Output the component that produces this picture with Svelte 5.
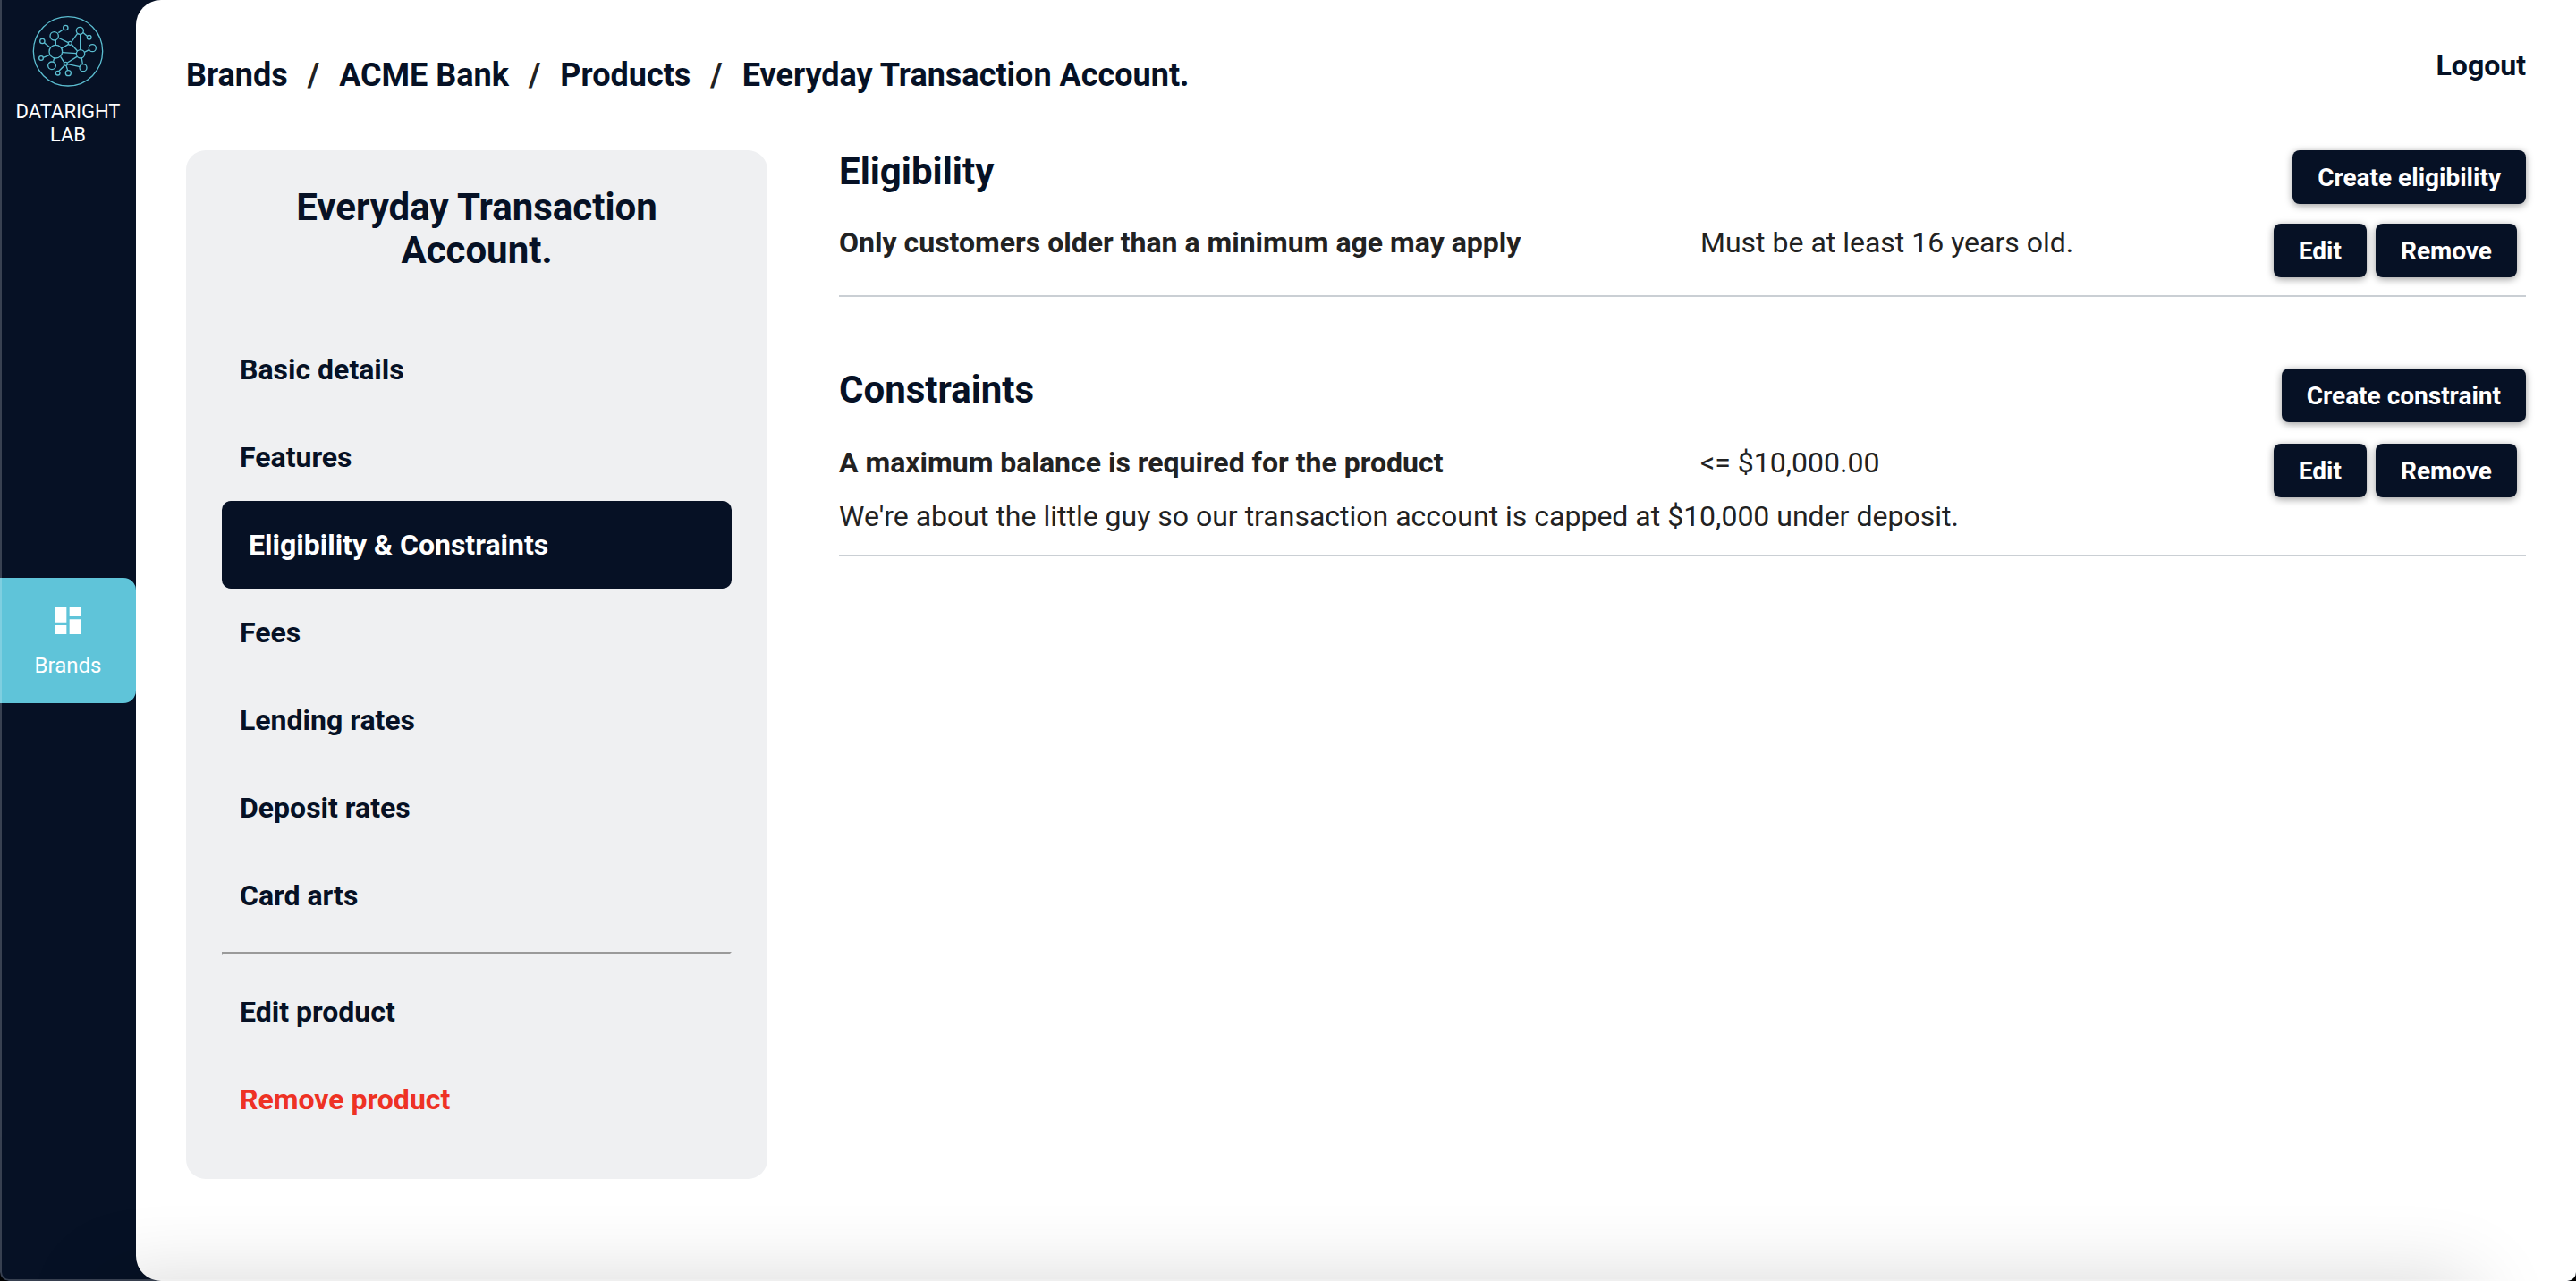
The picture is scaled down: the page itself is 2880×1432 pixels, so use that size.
<script>
  const crumbs = ['Brands', 'ACME Bank', 'Products', 'Everyday Transaction Account.'];

  const menu = [
    'Basic details',
    'Features',
    'Eligibility & Constraints',
    'Fees',
    'Lending rates',
    'Deposit rates',
    'Card arts'
  ];
  let active = $state('Eligibility & Constraints');

  const sections = [
    {
      id: 'eligibility',
      title: 'Eligibility',
      action: 'Create eligibility',
      rows: [
        {
          name: 'Only customers older than a minimum age may apply',
          value: 'Must be at least 16 years old.'
        }
      ]
    },
    {
      id: 'constraints',
      title: 'Constraints',
      action: 'Create constraint',
      rows: [
        {
          name: 'A maximum balance is required for the product',
          value: '<= $10,000.00',
          note: "We're about the little guy so our transaction account is capped at $10,000 under deposit."
        }
      ]
    }
  ];

  const links = [
    [196, 110, 212, 99],
    [194, 126, 229, 143],
    [187, 135, 187, 152],
    [149, 144, 168, 159],
    [145, 193, 167, 184],
    [182, 194, 179, 206],
    [206, 162, 229, 149],
    [210, 176, 256, 179],
    [240, 140, 260, 112],
    [269, 116, 269, 167],
    [278, 109, 292, 121],
    [241, 150, 260, 171],
    [283, 175, 300, 166],
    [203, 190, 215, 209],
    [226, 210, 258, 190],
    [227, 215, 268, 224],
    [274, 195, 277, 215],
    [216, 220, 198, 238],
    [222, 220, 227, 236]
  ];
  const nodes = [
    [187, 173, 22],
    [182, 121, 14],
    [220, 93, 8],
    [142, 138, 8],
    [138, 195, 7],
    [174, 220, 13],
    [235, 145, 6],
    [268, 103, 12],
    [299, 125, 7],
    [310, 161, 12],
    [270, 181, 14],
    [279, 227, 12],
    [220, 214, 6],
    [194, 245, 7],
    [229, 245, 9]
  ];
</script>

<div class="app">
  <aside class="rail">
    <a class="brand" href="#home">
      <svg class="logo" viewBox="108 51 240 240" aria-hidden="true">
        <circle cx="228" cy="172" r="116" />
        {#each links as [x1, y1, x2, y2]}
          <line {x1} {y1} {x2} {y2} />
        {/each}
        {#each nodes as [cx, cy, r]}
          <circle {cx} {cy} {r} />
        {/each}
      </svg>
      <span>DATARIGHT LAB</span>
    </a>
    <nav aria-label="Main">
      <a class="rail-item" href="#brands">
        <svg viewBox="0 0 24 24" aria-hidden="true">
          <path d="M3 13h8V3H3v10zm0 8h8v-6H3v6zm10 0h8V11h-8v10zm0-18v6h8V3h-8z" />
        </svg>
        <span>Brands</span>
      </a>
    </nav>
  </aside>

  <div class="page">
    <header>
      <nav class="crumbs" aria-label="Breadcrumb">
        {#each crumbs as crumb, i}
          {#if i > 0}<span>/</span>{/if}
          <a href="#crumb-{i}">{crumb}</a>
        {/each}
      </nav>
      <a class="logout" href="#logout">Logout</a>
    </header>

    <div class="columns">
      <aside class="card">
        <h1>Everyday Transaction Account.</h1>
        <nav aria-label="Product">
          {#each menu as item}
            <a class="item" class:active={item === active} href="#menu" onclick={() => (active = item)}>{item}</a>
          {/each}
          <hr />
          <a class="item" href="#edit">Edit product</a>
          <a class="item danger" href="#remove">Remove product</a>
        </nav>
      </aside>

      <main>
        {#each sections as section}
          <section class={section.id}>
            <div class="head">
              <h2>{section.title}</h2>
              <button>{section.action}</button>
            </div>
            {#each section.rows as row}
              <div class="row">
                <div class="facts">
                  <strong>{row.name}</strong>
                  <span>{row.value}</span>
                  {#if row.note}<p>{row.note}</p>{/if}
                </div>
                <div class="actions">
                  <button>Edit</button>
                  <button>Remove</button>
                </div>
              </div>
            {/each}
          </section>
        {/each}
      </main>
    </div>
  </div>
  <div class="glow"></div>
  <div class="edge"></div>
</div>

<style>
  :global(body) {
    background: #000;
  }
  .app {
    position: relative;
    display: grid;
    grid-template-columns: 152px 1fr;
    min-height: 100vh;
    overflow: hidden;
    border-radius: 0 0 10px 10px;
    background: #061125;
    color: #222;
    font-family: Roboto, sans-serif;
    font-size: 32px;
    line-height: 38px;
  }
  a {
    color: #061125;
    text-decoration: none;
  }
  h1,
  h2,
  p {
    margin: 0;
  }

  .rail {
    display: grid;
    grid-template-rows: 1fr auto 1fr;
  }
  .brand {
    display: flex;
    flex-direction: column;
    align-items: center;
    gap: 15px;
    padding: 17px 8px 0;
    color: #fff;
    font-size: 22px;
    line-height: 26px;
    text-align: center;
  }
  .logo {
    width: 80px;
    height: 80px;
    fill: none;
    stroke: #5bbdd0;
    stroke-width: 4;
  }
  .rail-item {
    display: flex;
    flex-direction: column;
    align-items: center;
    gap: 16px;
    padding: 28px 0;
    border-radius: 0 14px 14px 0;
    background: #5fc4d9;
    color: #fff;
    font-size: 24px;
    line-height: 28px;
  }
  .rail-item svg {
    width: 40px;
    height: 40px;
    fill: #fff;
  }

  .page {
    padding: 50px 56px;
    border-radius: 28px 0 0 28px;
    background: #fff;
  }
  header {
    display: flex;
    justify-content: space-between;
    align-items: flex-start;
    height: 118px;
    font-weight: 700;
  }
  .crumbs {
    display: flex;
    gap: 22px;
    padding-top: 13px;
    font-size: 36px;
    line-height: 42px;
  }
  .logout {
    padding-top: 4px;
  }

  .columns {
    display: grid;
    grid-template-columns: 650px 1fr;
    gap: 80px;
    align-items: start;
  }
  .card {
    padding: 40px;
    border-radius: 22px;
    background: #eff0f2;
  }
  h1,
  h2 {
    color: #061125;
    font-size: 42px;
    font-weight: 700;
    line-height: 48px;
  }
  h1 {
    padding: 0 60px 60px;
    text-align: center;
  }
  .item {
    display: block;
    padding: 30px 20px;
    border-radius: 10px;
    font-weight: 700;
  }
  .item.active {
    padding: 30px;
    background: #061125;
    color: #fff;
  }
  .item.danger {
    color: #ee3224;
  }
  hr {
    margin: 14px 0;
    border: 2px solid;
    border-color: #9a9a9a #eff0f2 #eff0f2 #9a9a9a;
  }

  main {
    display: grid;
    gap: 80px;
  }
  .head {
    display: flex;
    justify-content: space-between;
    align-items: flex-start;
  }
  button {
    height: 60px;
    padding: 2px 28px 0;
    border: 0;
    border-radius: 8px;
    background: #061125;
    box-shadow: 0 2px 8px rgba(0, 0, 0, 0.4);
    color: #fff;
    font: 700 28px/32px Roboto, sans-serif;
    white-space: nowrap;
  }
  .row {
    display: flex;
    align-items: flex-start;
    padding: 22px 0 20px;
    border-bottom: 2px solid #cacfd4;
  }
  .constraints .row {
    padding-top: 24px;
  }
  .facts {
    display: grid;
    grid-template-columns: 963px 1fr;
    flex: 1;
    gap: 22px 0;
    padding-top: 2px;
  }
  .facts p {
    grid-column: 1 / -1;
    padding-bottom: 4px;
  }
  .actions {
    display: flex;
    gap: 10px;
    padding-right: 10px;
  }

  /* soft shade rising from the bottom of the window */
  .glow {
    position: absolute;
    top: 100%;
    left: 115px;
    right: 115px;
    height: 200px;
    box-shadow: 0 0 90px rgba(0, 0, 0, 0.16);
    pointer-events: none;
  }
  .edge {
    position: absolute;
    inset: 0;
    border: 2px solid rgba(255, 255, 255, 0.2);
    border-width: 0 0 2px 2px;
    border-radius: 0 0 10px 10px;
    pointer-events: none;
  }
</style>
